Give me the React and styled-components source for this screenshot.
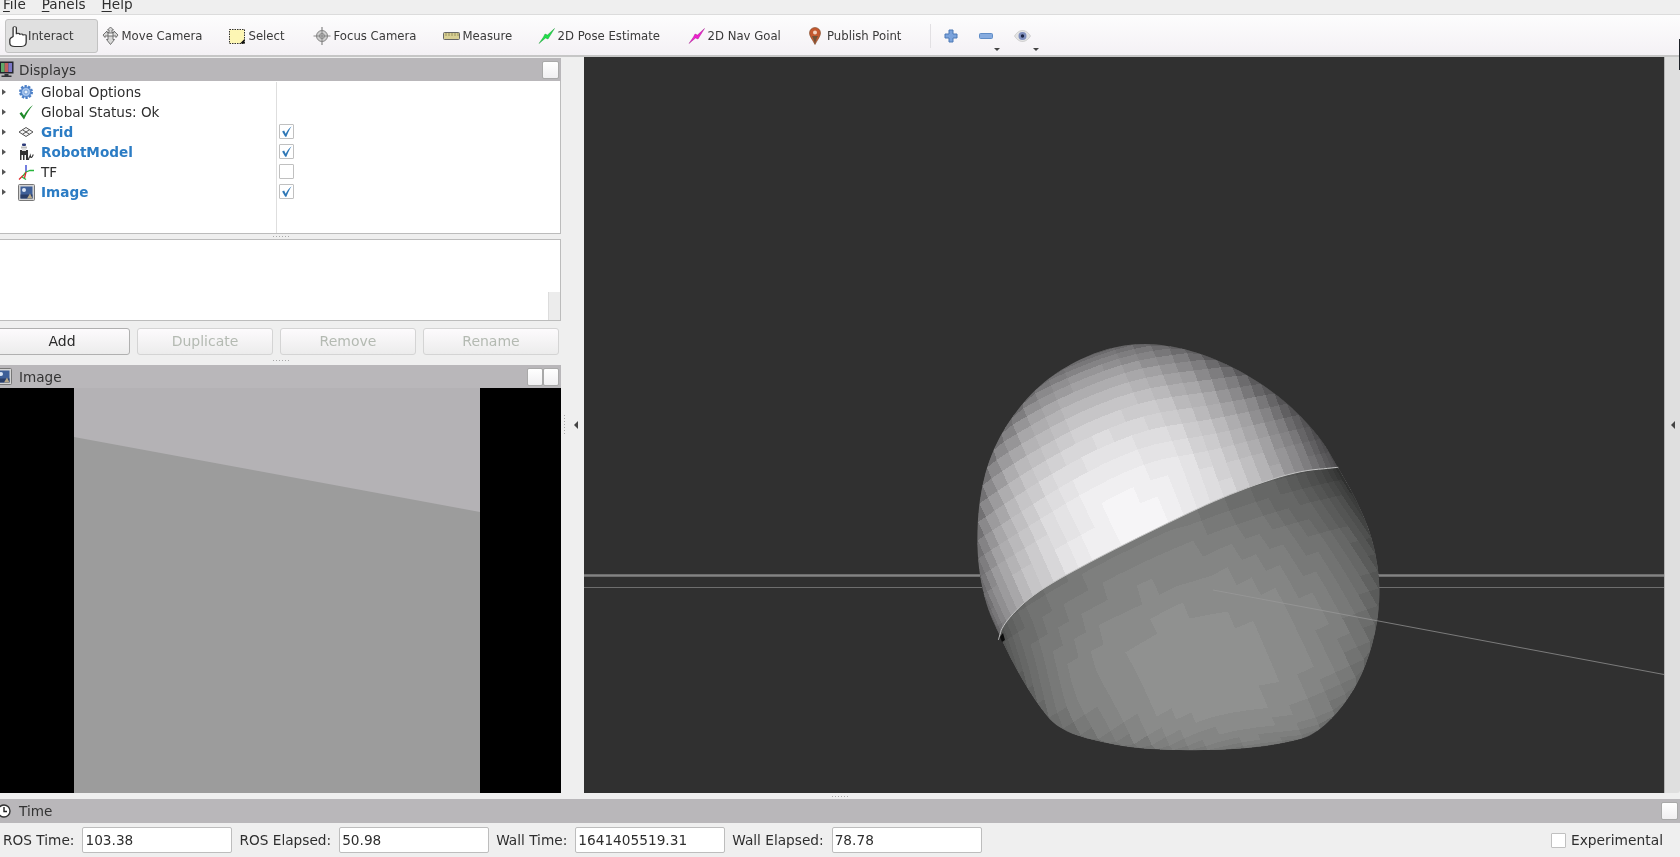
import React from "react"
import styled, { createGlobalStyle } from "styled-components"

const GlobalStyle = createGlobalStyle`
  html, body {
    margin: 0;
    padding: 0;
    background: #efefef;
    overflow: hidden;
  }
  * {
    box-sizing: border-box;
  }
`

const Page = styled.div`
  position: relative;
  width: 1680px;
  height: 857px;
  display: flex;
  flex-direction: column;
  overflow: hidden;
  background: #efefef;
  color: #2e2e2e;
  font-family: "DejaVu Sans", sans-serif;
  font-size: 13.6px;
  filter: blur(0.3px);
`

const MenuBar = styled.div`
  height: 15px;
  flex: none;
  display: flex;
  align-items: flex-end;
  padding: 0 0 2px 3px;
  gap: 16px;
  border-bottom: 1px solid #dcdcdc;
  line-height: 16px;
`

const MenuItem = styled.span`
  display: block;
  u {
    text-underline-offset: 2px;
  }
`

const ToolBar = styled.div`
  height: 42px;
  flex: none;
  display: flex;
  align-items: center;
  padding: 2px 0 0 5px;
  background: linear-gradient(#fdfdfd, #f4f1f5);
  border-bottom: 2px solid #c6c6c6;
  color: #3a3a3a;
  font-size: 11.7px;
`

const ToolButton = styled.div`
  width: ${p => p.$w}px;
  height: 34px;
  flex: none;
  display: flex;
  align-items: center;
  gap: ${p => p.$gap ?? 2.5}px;
  padding-left: ${p => p.$pad ?? 3}px;
  white-space: nowrap;
  border-radius: 3px;
  border: 1px solid ${p => (p.$active ? "#c2c2c2" : "transparent")};
  background: ${p => (p.$active ? "#e0e0e0" : "transparent")};
  svg {
    flex: none;
  }
`

const ToolSeparator = styled.div`
  width: 1px;
  height: 24px;
  margin: 0 13px 0 48px;
  background: #e2e0e3;
`

const ActionButton = styled.div`
  width: ${p => p.$w}px;
  height: 34px;
  flex: none;
  position: relative;
  display: flex;
  align-items: center;
`

const DropArrow = styled.span`
  position: absolute;
  right: ${p => p.$right}px;
  bottom: 2px;
  width: 0;
  height: 0;
  border-left: 3px solid transparent;
  border-right: 3px solid transparent;
  border-top: 3px solid #444;
`

const Middle = styled.div`
  height: 736px;
  flex: none;
  display: flex;
`

const LeftDock = styled.div`
  width: 561px;
  flex: none;
  display: flex;
  flex-direction: column;
  padding-top: 1px;
`

const DockHeader = styled.div`
  height: ${p => p.$h ?? 23}px;
  flex: none;
  display: flex;
  align-items: center;
  gap: 5px;
  padding-right: 2px;
  background: #b9b7ba;
  color: #333;
`

const DockTitle = styled.span`
  flex: 1;
`

const DockIcon = styled.span`
  width: ${p => p.$w ?? 15}px;
  margin-left: ${p => p.$left ?? -1}px;
  display: flex;
  flex: none;
`

const DockButton = styled.span`
  width: ${p => p.$w ?? 17}px;
  height: 18px;
  margin-left: ${p => (p.$join ? "-5px" : "0")};
  flex: none;
  border: 1px solid #a9a9a9;
  border-radius: 2px;
  background: linear-gradient(#ffffff, #f0eff1);
`

const Tree = styled.div`
  height: 153px;
  flex: none;
  display: flex;
  flex-direction: column;
  padding-top: 1px;
  background: #fff;
  border-bottom: 1px solid #bcbcbc;
  border-right: 1px solid #bcbcbc;
`

const TreeRow = styled.div`
  height: 20px;
  flex: none;
  display: flex;
  align-items: center;
  line-height: 20px;
`

const TreeFiller = styled.div`
  flex: 1;
  width: 277px;
  border-right: 1px solid #dedede;
`

const NameCell = styled.div`
  width: 277px;
  height: 100%;
  flex: none;
  display: flex;
  align-items: center;
  padding-left: 2px;
  border-right: 1px solid #dedede;
`

const Caret = styled.span`
  width: 0;
  height: 0;
  flex: none;
  margin-right: 11px;
  border-top: 3.5px solid transparent;
  border-bottom: 3.5px solid transparent;
  border-left: 4px solid #555;
`

const RowIcon = styled.span`
  width: 18px;
  height: 18px;
  flex: none;
  display: flex;
  align-items: center;
  justify-content: center;
  margin-right: 6px;
`

const RowLabel = styled.span`
  color: ${p => (p.$on ? "#2b7cc4" : "#2e2e2e")};
  font-weight: ${p => (p.$on ? 700 : 400)};
`

const Check = styled.span`
  width: 15px;
  height: 15px;
  flex: none;
  display: flex;
  align-items: center;
  justify-content: center;
  background: #fff;
  border: 1px solid #c0c0c0;
  border-radius: 1px;
`

const RowCheck = styled(Check)`
  margin: 0 0 1px 2px;
`

const Splitter = styled.div`
  height: ${p => p.$h}px;
  flex: none;
  display: flex;
  align-items: center;
  justify-content: center;
`

const GripDots = styled.span`
  width: 16px;
  height: 1px;
  background-image: repeating-linear-gradient(90deg, #a9a9a9 0 1px, transparent 1px 3px);
`

const Description = styled.div`
  height: 82px;
  flex: none;
  display: flex;
  justify-content: flex-end;
  align-items: flex-end;
  background: #fff;
  border: 1px solid #bcbcbc;
  border-left: none;
`

const DescScroll = styled.div`
  width: 12px;
  height: 28px;
  background: #ececec;
  border-left: 1px solid #dcdcdc;
`

const ButtonRow = styled.div`
  display: flex;
  flex: none;
  gap: 7px;
  margin: 7px 0 0 -6px;
`

const PanelButton = styled.div`
  width: 136px;
  height: 27px;
  flex: none;
  display: flex;
  align-items: center;
  justify-content: center;
  padding-bottom: 2px;
  font-size: 14px;
  border: 1px solid ${p => (p.$off ? "#d4d4d4" : "#b0b0b0")};
  border-radius: 3px;
  background: linear-gradient(#fdfbfd, #ececec);
  color: ${p => (p.$off ? "#b4bab2" : "#2a2a2a")};
`

const ImageView = styled.div`
  flex: 1;
  display: flex;
  min-height: 0;
  background: #000;
  padding: 0 81px 0 74px;
  svg {
    display: block;
  }
`

const Gutter = styled.div`
  width: 23px;
  flex: none;
  display: flex;
  align-items: center;
  padding: 0 0 0 3px;
  gap: 9px;
`

const VGrip = styled.span`
  width: 1px;
  height: 20px;
  margin-top: -1px;
  background-image: repeating-linear-gradient(#adadad 0 1px, transparent 1px 3px);
`

const LeftArrow = styled.span`
  width: 0;
  height: 0;
  border-top: 4px solid transparent;
  border-bottom: 4px solid transparent;
  border-right: 4px solid #444;
`

const Viewport = styled.div`
  width: 1080px;
  flex: none;
  background: #303030;
  svg {
    display: block;
  }
`

const RightStrip = styled.div`
  flex: 1;
  display: flex;
  align-items: center;
  justify-content: center;
  background: #dfdfdf;
  border-left: 1px solid #b5b5b5;
  border-radius: 0 0 3px 0;
`

const BottomGrip = styled.div`
  height: 6px;
  flex: none;
  display: flex;
  align-items: center;
  justify-content: center;
`

const TimeBar = styled.div`
  flex: 1;
  display: flex;
  align-items: center;
  padding: 0 17px 0 3px;
  font-size: 13.7px;
`

const TimeLabel = styled.span`
  margin-right: 8px;
`

const TimeField = styled.div`
  width: 150px;
  height: 26px;
  margin-right: 7px;
  display: flex;
  align-items: center;
  padding-left: 2px;
  background: #fff;
  border: 1px solid #bdbdbd;
  border-radius: 2px;
`

const Experimental = styled.div`
  margin-left: auto;
  display: flex;
  align-items: center;
  gap: 5px;
  font-size: 13.8px;
`

const CornerMark = styled.div`
  position: absolute;
  left: 1679px;
  top: 39px;
  width: 1px;
  height: 31px;
  background: #1e2228;
`

// ----- robot head mesh -----

// outline of the head, in px of a 3x crop starting at (960, 330)
const OUTLINE = [
  [560, 38], [700, 60], [850, 125], [980, 215], [1080, 320], [1135, 415], [1190, 510], [1240, 630],
  [1262, 770], [1250, 900], [1210, 1030], [1150, 1130], [1070, 1210], [1000, 1235], [850, 1258],
  [640, 1262], [480, 1250], [300, 1205], [230, 1120], [170, 1020], [125, 930], [75, 820],
  [50, 680], [55, 520], [85, 390], [140, 280], [230, 170], [340, 95], [450, 52],
]
const RIM = [[115, 930], [130, 880], [220, 790], [400, 690], [600, 590], [800, 495], [1000, 425], [1135, 412]]

const smooth = (list, closed) => {
  const out = []
  const n = closed ? list.length : list.length - 1
  if (!closed) out.push(list[0])
  for (let i = 0; i < n; i++) {
    const a = list[i]
    const b = list[(i + 1) % list.length]
    out.push([a[0] * 0.75 + b[0] * 0.25, a[1] * 0.75 + b[1] * 0.25])
    out.push([a[0] * 0.25 + b[0] * 0.75, a[1] * 0.25 + b[1] * 0.75])
  }
  if (!closed) out.push(list[list.length - 1])
  return out
}

const SMOOTH_OUTLINE = smooth(smooth(smooth(OUTLINE, true), true), true)
const SMOOTH_RIM = smooth(smooth(smooth(RIM, false), false), false)

const toX = x => 960 + x / 3
const toY = y => 330 + y / 3
const points = list => list.map(([x, y]) => `${toX(x).toFixed(1)},${toY(y).toFixed(1)}`).join(" ")

const CX = 656
const CY = 650
const polar = SMOOTH_OUTLINE.map(([x, y]) => ({
  a: Math.atan2(y - CY, x - CX),
  r: Math.hypot(x - CX, y - CY),
})).sort((p, q) => p.a - q.a)

const radiusAt = a => {
  const aa = a < polar[0].a ? a + Math.PI * 2 : a
  for (let i = 0; i < polar.length; i++) {
    const p = polar[i]
    const q = polar[(i + 1) % polar.length]
    const qa = i === polar.length - 1 ? q.a + Math.PI * 2 : q.a
    if (aa >= p.a && aa <= qa) return p.r + ((aa - p.a) / (qa - p.a)) * (q.r - p.r)
  }
  return polar[0].r
}

const project = ([x, y]) => {
  const a = Math.atan2(-y, x)
  const r = radiusAt(a) * Math.hypot(x, y)
  return [toX(CX + Math.cos(a) * r), toY(CY + Math.sin(a) * r)]
}

const TURN = 0.4
const CELLS = 36

// a grid that tightens towards the silhouette, turned to match the facets
const vertex = (i, j) => {
  const s = Math.sin(((i / CELLS) * 2 - 1) * (Math.PI / 2))
  const t = Math.sin(((j / CELLS) * 2 - 1) * (Math.PI / 2))
  const u = s
  const v = t - 0.1 * s * s
  let x = u * Math.cos(TURN) - v * Math.sin(TURN)
  let y = u * Math.sin(TURN) + v * Math.cos(TURN)
  const r = Math.hypot(x, y)
  if (r > 1) {
    x /= r
    y /= r
  }
  return [x, y]
}

const buildMesh = (light, base, span, power, step, tint) => {
  const buckets = {}
  for (let i = 0; i < CELLS; i++) {
    for (let j = 0; j < CELLS; j++) {
      const corners = [vertex(i, j), vertex(i + 1, j), vertex(i + 1, j + 1), vertex(i, j + 1)]
      const x = corners.reduce((s, c) => s + c[0] / 4, 0)
      const y = corners.reduce((s, c) => s + c[1] / 4, 0)
      const z = Math.sqrt(Math.max(0, 1 - x * x - y * y))
      const dot = Math.max(0, x * light[0] + y * light[1] + z * light[2])
      const shade = Math.round((base + span * Math.pow(dot, power)) / step) * step
      const d = "M" + corners.map(c => project(c).map(v => v.toFixed(1)).join(",")).join("L") + "Z"
      buckets[shade] = (buckets[shade] || "") + d
    }
  }
  return Object.entries(buckets).map(([shade, d]) => ({
    d,
    fill: `rgb(${+shade + tint[0]},${+shade + tint[1]},${+shade + tint[2]})`,
  }))
}

const UPPER_MESH = buildMesh([-0.2, 0.1, 0.974], 78, 168, 1.4, 6, [0, -1, 1])
const LOWER_MESH = buildMesh([0.1, -0.6, 0.79], 50, 96, 0.9, 6, [0, 1, 0])

const UPPER_REGION = [...SMOOTH_RIM, [1500, 412], [1500, -100], [-100, -100], [-100, 930]]

const RobotHead = () => (
  <svg width="1080" height="736" viewBox="584 57 1080 736">
    <defs>
      <clipPath id="head-outline">
        <polygon points={points(SMOOTH_OUTLINE)} />
      </clipPath>
      <clipPath id="upper-shell">
        <polygon points={points(UPPER_REGION)} />
      </clipPath>
    </defs>
    <rect x="584" y="574" width="1080" height="3" fill="#6e6e6e" />
    <rect x="584" y="575" width="1080" height="1" fill="#838383" />
    <rect x="584" y="587" width="1080" height="1" fill="#6e6e6e" />
    <polygon points={points(SMOOTH_OUTLINE)} fill="#6a6a6a" />
    <g clipPath="url(#head-outline)">
      <g shapeRendering="crispEdges">
        {LOWER_MESH.map(m => (
          <path key={m.fill} d={m.d} fill={m.fill} />
        ))}
      </g>
      <g clipPath="url(#upper-shell)" shapeRendering="crispEdges">
        {UPPER_MESH.map(m => (
          <path key={m.fill} d={m.d} fill={m.fill} />
        ))}
      </g>
    </g>
    <polyline
      points={points(SMOOTH_RIM)}
      fill="none"
      stroke="#c4c4c4"
      strokeWidth="1"
      strokeLinejoin="round"
    />
    <path d="M1000 637 q2 -3 3 -4 l2 7 -3 2z" fill="#0c0c0c" />
    <line x1="1213" y1="590" x2="1664" y2="674.5" stroke="#9a9a9a" strokeWidth="1" strokeOpacity="0.7" />
  </svg>
)

// ----- small icons -----

const HandIcon = () => (
  <svg width="18" height="21" viewBox="2.500 1 11 18" preserveAspectRatio="none">
    <path
      d="M5 10V2.600c0-1.400 2-1.400 2 0V8c0-1 2-1 2 0v.6c0-1 2-1 2 0v.6c0-1 2-1 2 0V15c0 2-1 3.500-3 3.500H6c-2 0-3-1-3-3v-3c0-1 1-1.800 2-2.500z"
      fill="#fff"
      stroke="#333"
      strokeWidth="0.8"
    />
  </svg>
)

const MoveCamIcon = () => (
  <svg width="17" height="20" viewBox="0 0 17 20" fill="#d8d8d8" stroke="#666" strokeWidth="0.9">
    <path d="M8.500 1l3 3H10v2.500h2V5l4 4-2 2.500V10H11v3.500h1.500l-4 5-4-5H6V10H3v1.500L1 9l4-4v1.500h2V4H5.500z" />
    <path d="M6 7h5v3H6z" fill="#f4f4f4" />
  </svg>
)

const SelectIcon = () => (
  <svg width="17" height="17" viewBox="0 0 17 17">
    <rect x="0.500" y="1.500" width="15" height="14" fill="#fdf6b4" stroke="#333" strokeWidth="1" strokeDasharray="1.500 1" />
    <path d="M11 15.500l4.500-4.500v4.500z" fill="#111" />
  </svg>
)

const FocusIcon = () => (
  <svg width="18" height="20" viewBox="0 0 18 20" fill="none" stroke="#858585">
    <path d="M9 1v18M0.500 10h17" strokeWidth="1.200" />
    <circle cx="9" cy="10" r="5.500" fill="#cfcfcf" />
    <circle cx="9" cy="10" r="2.500" />
    <path d="M9 4.500v11M3.500 10h11" />
  </svg>
)

const MeasureIcon = () => (
  <svg width="17" height="8" viewBox="0 0 17 8">
    <rect x="0.500" y="0.500" width="16" height="7" rx="1" fill="#d8cf94" stroke="#666" />
    <path d="M3 1v3M6 1v3M9 1v3M12 1v3M15 1v3" stroke="#8b8350" strokeWidth="0.8" />
  </svg>
)

const ArrowIcon = ({ color, dark }) => (
  <svg width="17" height="16" viewBox="0 0 17 16">
    <path d="M1 15.500L5.500 9 7 6 9.500 7 16.500 0.500 11.500 8.500 10 11 7.500 10z" fill={color} stroke={dark} strokeWidth="0.4" />
  </svg>
)

const PinIcon = () => (
  <svg width="12" height="18" viewBox="0 0 12 18">
    <path d="M6 17.500C3.500 12.500 0.500 9.500 0.500 6a5.500 5.500 0 0 1 11 0c0 3.500-3 6.500-5.500 11.500z" fill="#c4592f" stroke="#7b4a2a" strokeWidth="0.6" />
    <path d="M6 17.500C5 12 3 9 3 9h6s-2 3-3 8.500z" fill="#6e5238" />
    <circle cx="6" cy="5.500" r="2" fill="#f1d2bf" />
  </svg>
)

const PlusIcon = () => (
  <svg width="14" height="14" viewBox="0 0 14 14">
    <path d="M5 1h4v4h4v4H9v4H5V9H1V5h4z" fill="#7ba3dc" stroke="#4d79b5" strokeWidth="1" />
  </svg>
)

const MinusIcon = () => (
  <svg width="14" height="6" viewBox="0 0 14 6">
    <rect x="0.500" y="0.500" width="13" height="5" rx="1" fill="#86abdf" stroke="#5f8cc6" />
  </svg>
)

const EyeIcon = () => (
  <svg width="17" height="12" viewBox="0 0 17 12">
    <path d="M0.500 6C3 2 6 0.500 8.500 0.500S14 2 16.500 6C14 10 11 11.500 8.500 11.500S3 10 0.500 6z" fill="#e4e4e4" stroke="#bbb" strokeWidth="0.6" />
    <circle cx="8.500" cy="6" r="4" fill="#7f8fbd" />
    <circle cx="8.500" cy="6" r="1.700" fill="#1c2444" />
  </svg>
)

const MonitorIcon = () => (
  <svg width="15" height="19" viewBox="0 0 15 19">
    <rect x="0.500" y="1.500" width="14" height="12" fill="#22242c" />
    <rect x="2" y="3" width="3.700" height="9" fill="#5fa96a" />
    <rect x="5.700" y="3" width="3.700" height="9" fill="#c0605d" />
    <rect x="9.400" y="3" width="3.700" height="9" fill="#7d78c8" />
    <path d="M5.500 14h4v1.500h3V17h-10v-1.500h3z" fill="#33343a" />
  </svg>
)

const GearIcon = () => (
  <svg width="16" height="16" viewBox="0 0 16 16">
    <circle cx="8" cy="8" r="5.800" fill="#7ba6e0" stroke="#4b7fc6" strokeWidth="2.400" strokeDasharray="2.200 1.400" />
    <circle cx="8" cy="8" r="4.500" fill="#a6c5ee" stroke="#4b7fc6" strokeWidth="0.800" />
    <circle cx="8" cy="8" r="2" fill="#e4eefb" stroke="#5b8ccc" strokeWidth="0.700" />
  </svg>
)

const StatusIcon = () => (
  <svg width="16" height="16" viewBox="0 0 16 16">
    <path d="M1.500 9.500l2-1.500 2.500 3.500C8 7.500 11 4 15 1 11.500 5 8.500 10 6 15.500z" fill="#1f8a2a" />
  </svg>
)

const GridIcon = () => (
  <svg width="16" height="12" viewBox="0 0 16 12" fill="none" stroke="#555" strokeWidth="1">
    <path d="M8 1.500L15 6l-7 4.500L1 6z" fill="#f4f4f4" />
    <path d="M4.500 3.700l7 4.600M11.500 3.700l-7 4.600" />
  </svg>
)

const RobotIcon = () => (
  <svg width="16" height="18" viewBox="0 0 16 18">
    <rect x="4" y="0.500" width="4" height="2.500" rx="1" fill="#2c3a78" />
    <rect x="3" y="3.500" width="6" height="2" fill="#bbb" />
    <path d="M2 7h8v10H8v-5H6.500v5H5v-5H3.500v5H2z" fill="#333" />
    <path d="M10.500 17c0-3 1-2 1.800-4.500.6 3 1.500 2.500 3-1" fill="none" stroke="#333" strokeWidth="1.100" />
    <rect x="4" y="6" width="4" height="2" fill="#e0e0e0" />
  </svg>
)

const TfIcon = () => (
  <svg width="17" height="17" viewBox="0 0 17 17" fill="none" strokeWidth="1.300">
    <path d="M8 8V1" stroke="#2b3bd0" />
    <path d="M8 8l4-1.500h4" stroke="#27b53a" />
    <path d="M8 8L5 12" stroke="#27b53a" />
    <path d="M8 8L6.500 14M5 11.500L1 15.500" stroke="#e02c2c" />
    <path d="M4 13l4 2.500" stroke="#27b53a" />
  </svg>
)

const PictureIcon = ({ size = 17 }) => (
  <svg width={size} height={size} viewBox="0 0 17 17">
    <rect x="0.500" y="0.500" width="16" height="16" rx="1" fill="#d4d4d4" stroke="#777" />
    <rect x="2.500" y="2.500" width="12" height="12" fill="#3e5f98" />
    <rect x="2.500" y="10.500" width="12" height="4" fill="#2a3e68" />
    <circle cx="6" cy="6" r="2" fill="#dbe6f6" />
    <path d="M9 14.500l3-5 2.500 5z" fill="#b7a98a" />
  </svg>
)

const ClockIcon = () => (
  <svg width="14" height="16" viewBox="0 0 14 16">
    <circle cx="7" cy="8" r="6" fill="#fff" stroke="#333" strokeWidth="1.400" />
    <path d="M7 4v4.500h3" fill="none" stroke="#222" strokeWidth="1.400" />
  </svg>
)

const Tick = () => (
  <svg width="13" height="13" viewBox="0 0 11 11">
    <path d="M1.800 5.500l1.700-.8 1.300 2.600C6 5 7.500 3 9.800 1 8.200 3.500 6.600 6.700 5.400 10H4.400z" fill="#2f78b7" />
  </svg>
)

const TOOLS = [
  { label: "Move Camera", w: 127, icon: <MoveCamIcon /> },
  { label: "Select", w: 84, icon: <SelectIcon /> },
  { label: "Focus Camera", w: 130, icon: <FocusIcon /> },
  { label: "Measure", w: 95, icon: <MeasureIcon /> },
  { label: "2D Pose Estimate", w: 150, icon: <ArrowIcon color="#1fe04a" dark="#128a2c" /> },
  { label: "2D Nav Goal", w: 121, icon: <ArrowIcon color="#f01fd0" dark="#96127f" /> },
  { label: "Publish Point", w: 77, icon: <PinIcon />, gap: 6 },
]

const DISPLAYS = [
  { label: "Global Options", icon: <GearIcon /> },
  { label: "Global Status: Ok", icon: <StatusIcon /> },
  { label: "Grid", icon: <GridIcon />, on: true, check: true },
  { label: "RobotModel", icon: <RobotIcon />, on: true, check: true },
  { label: "TF", icon: <TfIcon />, check: false },
  { label: "Image", icon: <PictureIcon />, on: true, check: true },
]

const TIMES = [
  ["ROS Time:", "103.38"],
  ["ROS Elapsed:", "50.98"],
  ["Wall Time:", "1641405519.31"],
  ["Wall Elapsed:", "78.78"],
]

export default function App() {
  return (
    <Page>
      <GlobalStyle />
      <CornerMark />
      <MenuBar>
        <MenuItem><u>F</u>ile</MenuItem>
        <MenuItem><u>P</u>anels</MenuItem>
        <MenuItem><u>H</u>elp</MenuItem>
      </MenuBar>
      <ToolBar>
        <ToolButton $w={93} $active $gap={1} $pad={3}>
          <HandIcon />
          Interact
        </ToolButton>
        {TOOLS.map(t => (
          <ToolButton key={t.label} $w={t.w} $gap={t.gap}>
            {t.icon}
            {t.label}
          </ToolButton>
        ))}
        <ToolSeparator />
        <ActionButton $w={35}><PlusIcon /></ActionButton>
        <ActionButton $w={35}><MinusIcon /><DropArrow $right={14} /></ActionButton>
        <ActionButton $w={30}><EyeIcon /><DropArrow $right={5} /></ActionButton>
      </ToolBar>
      <Middle>
        <LeftDock>
          <DockHeader>
            <DockIcon><MonitorIcon /></DockIcon>
            <DockTitle>Displays</DockTitle>
            <DockButton />
          </DockHeader>
          <Tree>
            {DISPLAYS.map(d => (
              <TreeRow key={d.label}>
                <NameCell>
                  <Caret />
                  <RowIcon>{d.icon}</RowIcon>
                  <RowLabel $on={d.on}>{d.label}</RowLabel>
                </NameCell>
                {d.check !== undefined && <RowCheck>{d.check && <Tick />}</RowCheck>}
              </TreeRow>
            ))}
            <TreeFiller />
          </Tree>
          <Splitter $h={5}><GripDots /></Splitter>
          <Description><DescScroll /></Description>
          <ButtonRow>
            <PanelButton>Add</PanelButton>
            <PanelButton $off>Duplicate</PanelButton>
            <PanelButton $off>Remove</PanelButton>
            <PanelButton $off>Rename</PanelButton>
          </ButtonRow>
          <Splitter $h={10}><GripDots /></Splitter>
          <DockHeader>
            <DockIcon $left={-5} $w={19}><PictureIcon /></DockIcon>
            <DockTitle>Image</DockTitle>
            <DockButton $w={16} />
            <DockButton $w={16} $join />
          </DockHeader>
          <ImageView>
            <svg width="406" height="405" viewBox="0 0 406 405">
              <rect width="406" height="405" fill="#9c9c9c" />
              <polygon points="0,0 406,0 406,124 0,49" fill="#b4b2b5" />
            </svg>
          </ImageView>
        </LeftDock>
        <Gutter>
          <VGrip />
          <LeftArrow />
        </Gutter>
        <Viewport>
          <RobotHead />
        </Viewport>
        <RightStrip><LeftArrow /></RightStrip>
      </Middle>
      <BottomGrip><GripDots /></BottomGrip>
      <DockHeader $h={24}>
        <DockIcon $left={-3} $w={17}><ClockIcon /></DockIcon>
        <DockTitle>Time</DockTitle>
        <DockButton />
      </DockHeader>
      <TimeBar>
        {TIMES.map(([label, value]) => (
          <React.Fragment key={label}>
            <TimeLabel>{label}</TimeLabel>
            <TimeField>{value}</TimeField>
          </React.Fragment>
        ))}
        <Experimental>
          <Check />
          Experimental
        </Experimental>
      </TimeBar>
    </Page>
  )
}
